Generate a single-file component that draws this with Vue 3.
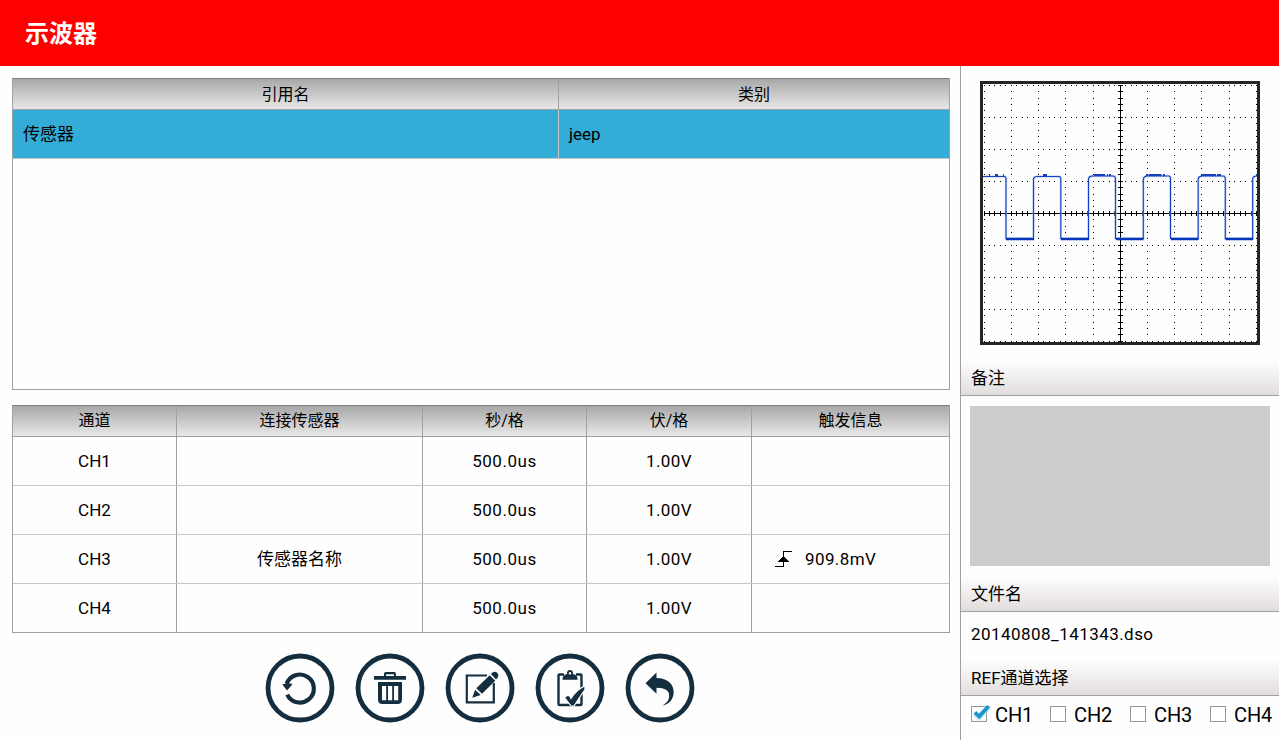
<script setup>
const channels = [
  { name: 'CH1', sensor: '', time: '500.0us', volt: '1.00V', trigger: '' },
  { name: 'CH2', sensor: '', time: '500.0us', volt: '1.00V', trigger: '' },
  { name: 'CH3', sensor: '传感器名称', time: '500.0us', volt: '1.00V', trigger: '909.8mV' },
  { name: 'CH4', sensor: '', time: '500.0us', volt: '1.00V', trigger: '' },
]
const refs = [
  { name: 'CH1', on: true },
  { name: 'CH2', on: false },
  { name: 'CH3', on: false },
  { name: 'CH4', on: false },
]

// Graticule: 10 x 8 divisions, five subdivisions each
const xs = Array.from({ length: 51 }, (_, i) => Math.floor(1.05 + 5.448 * i))
const ys = Array.from({ length: 41 }, (_, i) => Math.floor(1.3 + 6.4 * i))
let dots = ''
let ticks = ''
ys.forEach((y, j) => {
  xs.forEach((x, i) => {
    if (i % 5 === 0 || j % 5 === 0) dots += `M${x} ${y}h1v1h-1z`
  })
})
xs.forEach((x) => (ticks += `M${x} 127h1v5h-1z`))
ys.forEach((y) => (ticks += `M135 ${y}h5v1h-5z`))
</script>

<template>
  <div class="screen">
    <header class="title">示波器</header>
    <div class="body">
      <main class="left">
        <section class="grid refs">
          <div class="row head">
            <div class="cell">引用名</div>
            <div class="cell">类别</div>
          </div>
          <div class="row selected">
            <div class="cell">传感器</div>
            <div class="cell">jeep</div>
          </div>
        </section>
        <section class="grid chans">
          <div class="row head">
            <div class="cell">通道</div>
            <div class="cell">连接传感器</div>
            <div class="cell">秒/格</div>
            <div class="cell">伏/格</div>
            <div class="cell">触发信息</div>
          </div>
          <div v-for="c in channels" :key="c.name" class="row">
            <div class="cell name">{{ c.name }}</div>
            <div class="cell">{{ c.sensor }}</div>
            <div class="cell time">{{ c.time }}</div>
            <div class="cell volt">{{ c.volt }}</div>
            <div class="cell trig">
              <template v-if="c.trigger">
                <svg class="edge" width="17" height="17" viewBox="0 0 17 17" shape-rendering="crispEdges">
                  <path d="M8 0h9v1H9v15H0v-1h8zM8 5h1v1h1v1h1v1h1v1h1v1h1v1H3v-1h1V9h1V8h1V7h1V6h1z" />
                </svg>
                <span>{{ c.trigger }}</span>
              </template>
            </div>
          </div>
        </section>
        <nav class="tools">
          <button aria-label="refresh">
            <svg viewBox="0 0 70 70">
              <circle class="ring" cx="35" cy="35" r="32" />
              <path d="M21.6 31A14 14 0 1 1 22.2 41.6" fill="none" stroke="#142e3f" stroke-width="4.200" />
              <path class="f" d="M17.200 31.200q5-.2 9.300-.6l.8.8-5.300 6z" />
            </svg>
          </button>
          <button aria-label="delete">
            <svg viewBox="0 0 70 70">
              <circle class="ring" cx="35" cy="35" r="32" />
              <path class="f" fill-rule="evenodd" d="M29 23v-2.200q0-1.800 1.800-1.800h8.400q1.800 0 1.800 1.800V23h10v3.800H19V23zM31 23h8v-1.800h-8zM23 29h24V46.500q0 4.500-4.500 4.500h-15q-4.500 0-4.500-4.500zM27 33V47.200h4.200V33zM33 33V47.200h4.200V33zM39 33V47.200h4.200V33z" />
            </svg>
          </button>
          <button aria-label="edit">
            <svg viewBox="0 0 70 70">
              <circle class="ring" cx="35" cy="35" r="32" />
              <path d="M42 22.500H21.800V49.400H48.800V30" fill="none" stroke="#142e3f" stroke-width="2.200" />
              <path d="M26 46L31 35 47 18 55 23 36 43z" fill="#fff" />
              <path class="f" d="M27.300 44.800l2.800-8 5.600 5.200zM31.300 35.300L44.700 22.300l5.600 5.400L37 40.800zM45.900 21.100l1.600-1.600q2.400-1.900 4.900.4 2 2.500 0 5L51 26.500z" />
            </svg>
          </button>
          <button aria-label="confirm">
            <svg viewBox="0 0 70 70">
              <circle class="ring" cx="35" cy="35" r="32" />
              <path d="M29 21.500h-4.500q-1 0-1 1V51q0 1 1 1H45.500q1 0 1-1V22.500q0-1-1-1H41" fill="none" stroke="#142e3f" stroke-width="2.400" />
              <path class="f" fill-rule="evenodd" d="M27.500 26.800q-.5-4.500 4.500-5.800-.3-4 3-4t3 4q5 1.300 4.500 5.800zM35 19a1.300 1.300 0 1 0 .01 0z" />
              <path d="M29.500 44.500q4.500-4.500 6.500 1Q41 37 50.500 32.500q-1 2-.5 4Q44 45 39 53h-3z" fill="#142e3f" stroke="#fff" stroke-width="1.200" />
            </svg>
          </button>
          <button aria-label="back">
            <svg viewBox="0 0 70 70">
              <circle class="ring" cx="35" cy="35" r="32" />
              <path class="f" d="M20.500 30.200L31.500 19.500v5.500C43 25.300 48.700 31 48.700 39.500 48.300 47 43.500 51.500 37 52.700c5-3 7.300-5.500 7.200-10.500C44 37.500 40 34.700 31.500 34.700v6z" />
            </svg>
          </button>
        </nav>
      </main>
      <aside class="side">
        <div class="scope">
          <svg width="274" height="258" viewBox="0 0 274 258">
            <g shape-rendering="crispEdges">
              <path :d="dots" />
              <path d="M1 129h273v1H1zM137 1h1v256h-1z" />
              <path :d="ticks" />
            </g>
            <path class="glow" d="M0 92.500H21.500Q23 93 23 94V154.500H50.500V95Q51 92.500 54 92.500H76Q77.800 92.500 77.800 95V154.500H105.500V95Q106 92 109 92H130Q132.500 92 132.500 95V154.500H160.300V95Q161 92 164 92H186Q187.500 92 187.500 95V154.500H215.200V95Q216 92 219 92H240Q242.300 92 242.300 95V154.500H269.700V95Q270 92 274 92" />
            <path class="wave" d="M0 92.500H21.500Q23 93 23 94V154.500H50.500V95Q51 92.500 54 92.500H76Q77.800 92.500 77.800 95V154.500H105.500V95Q106 92 109 92H130Q132.500 92 132.500 95V154.500H160.300V95Q161 92 164 92H186Q187.500 92 187.500 95V154.500H215.200V95Q216 92 219 92H240Q242.300 92 242.300 95V154.500H269.700V95Q270 92 274 92" />
            <path class="low" d="M23 155h28M78 155h28M133 155h27.500M188 155h27.500M242.500 155h27.500" />
            <path class="high" d="M6 91h1M12 91h3M20 91h1M60 91h4M111 91h11M124 91h1M126 91h2M163 91h2M165.500 91h13M180 91h2M218 91h15M234 91h4M273 91h1" />
          </svg>
        </div>
        <h2 class="bar b1">备注</h2>
        <div class="notes"></div>
        <h2 class="bar b2">文件名</h2>
        <div class="file">20140808_141343.dso</div>
        <h2 class="bar b3">REF通道选择</h2>
        <div class="checks">
          <label v-for="r in refs" :key="r.name">
            <span class="box">
              <svg v-if="r.on" class="tick" width="20" height="18" viewBox="0 0 20 18">
                <path d="M3.500 8.500L8 12.500 17.500 2.500" fill="none" stroke="#b4dff0" stroke-width="6" opacity=".5" />
                <path d="M2.500 8.800L5.200 6.100 8 8.700 16.200 0l3 2.200L8.300 14.200z" fill="#1797cb" />
              </svg>
            </span>
            <span>{{ r.name }}</span>
          </label>
        </div>
      </aside>
    </div>
  </div>
</template>

<style>
body {
  margin: 0;
}
</style>

<style scoped>
.screen {
  width: 1279px;
  height: 740px;
  display: flex;
  flex-direction: column;
  background: #fefefe;
  color: #000;
  font: 17px/24px Roboto, "Noto Sans CJK SC", sans-serif;
  overflow: hidden;
}
.screen * {
  box-sizing: border-box;
}
.title {
  height: 66px;
  flex: none;
  background: #f00;
  color: #fff;
  font-size: 24px;
  font-weight: 700;
  line-height: 68px;
  padding-left: 25px;
}
.body {
  flex: 1;
  display: flex;
}
.left {
  width: 960px;
  flex: none;
  padding: 12px 10px 0 12px;
}
.grid {
  border: 1px solid #a0a0a0;
  border-top-color: #7e7e7e;
}
.refs {
  height: 312px;
}
.chans {
  margin-top: 15px;
  height: 228px;
}
.row {
  display: grid;
  height: 49px;
  border-bottom: 1px solid #c6c6c6;
}
.chans .row:last-child {
  border-bottom: 0;
  height: 48px;
}
.refs .row {
  grid-template-columns: 546px 1fr;
}
.chans .row {
  grid-template-columns: 164px 246px 164px 165px 1fr;
}
.row.head {
  height: 31px;
  border-bottom-color: #a0a0a0;
  background: linear-gradient(#a8a8a8, #e8e8e8);
  font-size: 16px;
}
.refs .head .cell {
  padding-top: 2px;
}
.cell {
  display: flex;
  align-items: center;
  justify-content: center;
  border-right: 1px solid #a0a0a0;
}
.cell.name {
  letter-spacing: 0.1px;
}
.cell.time {
  letter-spacing: 0.55px;
}
.cell.volt,
.cell.trig {
  letter-spacing: 0.4px;
}
.head .cell {
  letter-spacing: 0;
}
.cell:last-child {
  border-right: 0;
}
.selected {
  background: #33acd7;
}
.selected .cell {
  justify-content: flex-start;
  padding-left: 10px;
  border-right-color: #c6c6c6;
}
.cell.trig {
  justify-content: flex-start;
  padding-left: 23px;
}
.edge {
  margin-right: 13px;
}
.tools {
  display: flex;
  justify-content: center;
  gap: 20px;
  margin-top: 19.5px;
  padding-right: 2.5px;
}
.tools button {
  width: 70px;
  height: 70px;
  padding: 0;
  border: 0;
  background: none;
}
.tools svg {
  display: block;
  width: 70px;
  height: 70px;
}
.ring {
  fill: none;
  stroke: #142e3f;
  stroke-width: 4.8;
}
.f {
  fill: #142e3f;
}
.side {
  width: 319px;
  flex: none;
  border-left: 1px solid #a0a0a0;
  padding-top: 15px;
}
.scope {
  width: 280px;
  height: 264px;
  margin-left: 19px;
  border: 3px solid #242626;
}
.scope svg {
  display: block;
}
.glow,
.wave,
.low,
.high {
  fill: none;
}
.glow {
  stroke: #a8c4f0;
  stroke-width: 2.4;
  opacity: 0.6;
}
.wave {
  stroke: #1740bd;
  stroke-width: 1.1;
}
.low {
  stroke: #0634bb;
  stroke-width: 2.4;
}
.high {
  stroke: #1740bd;
  stroke-width: 2;
}
.bar {
  margin: 0;
  height: 36px;
  padding: 4px 0 0 10px;
  border-bottom: 1px solid #a0a0a0;
  background: linear-gradient(#fefefe, #e2dddd);
  font-size: 17px;
  font-weight: 400;
  line-height: 28px;
}
.b1 {
  margin-top: 15px;
}
.notes {
  width: 300px;
  height: 160px;
  margin: 10px 0 0 9px;
  background: #ccc;
}
.b2 {
  margin-top: 10px;
}
.file {
  height: 48px;
  line-height: 44px;
  padding-left: 10px;
  letter-spacing: 0.45px;
}
.checks {
  display: flex;
  padding: 7px 0 0 10px;
  font-size: 20px;
  letter-spacing: -0.1px;
}
.checks label {
  width: 80px;
  flex: none;
  display: flex;
  align-items: center;
  gap: 8px;
}
.checks label:first-child {
  width: 79px;
}
.box {
  position: relative;
  width: 16px;
  height: 16px;
  margin-top: -2px;
  border: 1px solid #979797;
  background: #fff;
}
.tick {
  position: absolute;
  left: -1px;
  top: -2px;
}
</style>
